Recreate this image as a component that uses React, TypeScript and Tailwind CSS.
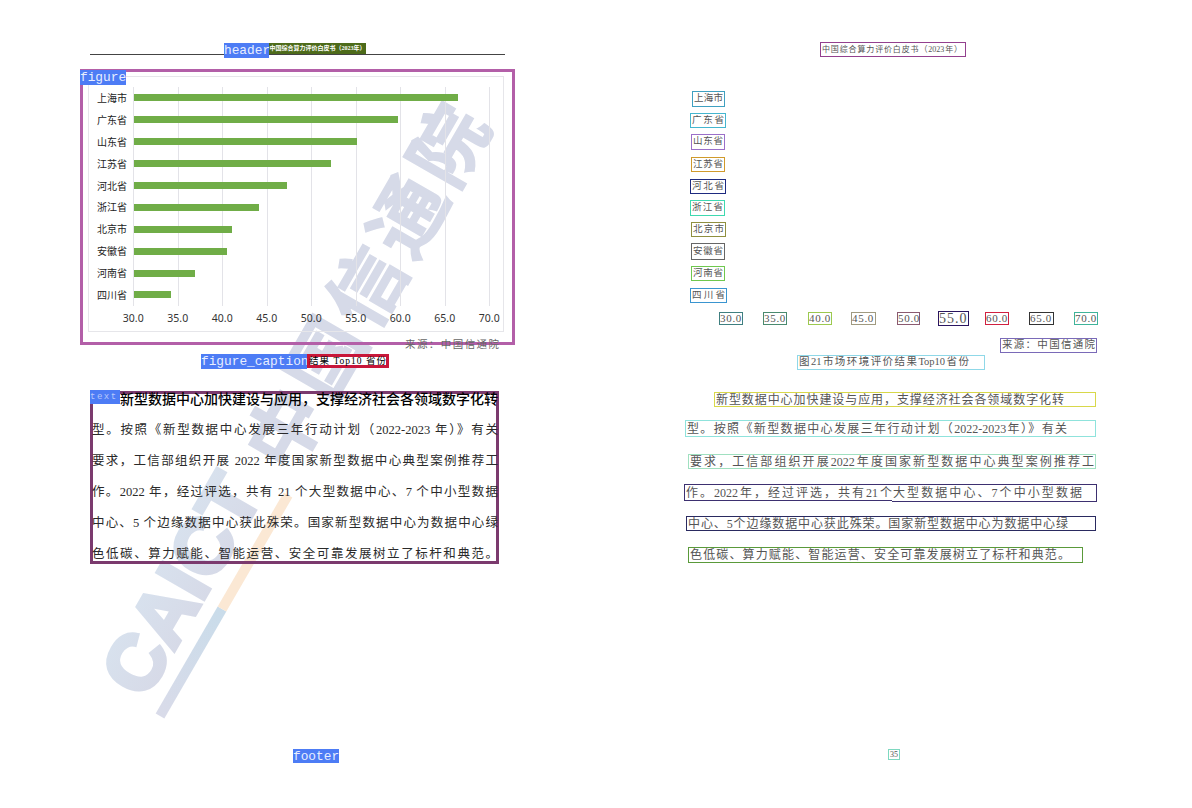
import React from 'react';

const provinces = [
  { name: '上海市', value: 66.5 },
  { name: '广东省', value: 59.7 },
  { name: '山东省', value: 55.15 },
  { name: '江苏省', value: 52.15 },
  { name: '河北省', value: 47.3 },
  { name: '浙江省', value: 44.1 },
  { name: '北京市', value: 41.05 },
  { name: '安徽省', value: 40.5 },
  { name: '河南省', value: 36.95 },
  { name: '四川省', value: 34.25 },
];

const ticks = ['30.0', '35.0', '40.0', '45.0', '50.0', '55.0', '60.0', '65.0', '70.0'];

const leftLines = [
  { text: '新型数据中心加快建设与应用，支撑经济社会各领域数字化转', cls: 'pl-[28px] text-[14px] font-medium text-black' },
  { text: '型。按照《新型数据中心发展三年行动计划（2022-2023 年）》有关', cls: 'text-[12.5px]' },
  { text: '要求，工信部组织开展 2022 年度国家新型数据中心典型案例推荐工', cls: 'text-[12.5px]' },
  { text: '作。2022 年，经过评选，共有 21 个大型数据中心、7 个中小型数据', cls: 'text-[12.5px]' },
  { text: '中心、5 个边缘数据中心获此殊荣。国家新型数据中心为数据中心绿', cls: 'text-[12.5px]' },
  { text: '色低碳、算力赋能、智能运营、安全可靠发展树立了标杆和典范。', cls: 'text-[12.5px]' },
];

// detected text boxes of the right page, coordinates are relative to the page
const boxes = [
  { text: '中国综合算力评价白皮书（2023年）', cls: 'left-[224px] top-[42px] w-[146px] h-[15px] border-[#93408e] text-[8px] px-[1px] pr-[3px]' },
  { text: '上海市', cls: 'left-[96px] top-[91px] w-[33px] h-[16px] border-[#3fa0c0] text-[9.5px] px-[1px]' },
  { text: '广东省', cls: 'left-[94px] top-[113px] w-[36px] h-[15px] border-[#45b6cf] text-[9.5px] px-[1px]' },
  { text: '山东省', cls: 'left-[95px] top-[134px] w-[34px] h-[16px] border-[#9b6fc9] text-[9.5px] px-[1px]' },
  { text: '江苏省', cls: 'left-[95px] top-[157px] w-[34px] h-[15px] border-[#d09a2c] text-[9.5px] px-[1px]' },
  { text: '河北省', cls: 'left-[94px] top-[179px] w-[36px] h-[15px] border-[#1e2a80] text-[9.5px] px-[1px]' },
  { text: '浙江省', cls: 'left-[94px] top-[200px] w-[35px] h-[16px] border-[#3fd9b0] text-[9.5px] px-[1px]' },
  { text: '北京市', cls: 'left-[95px] top-[222px] w-[35px] h-[15px] border-[#8f8f3f] text-[9.5px] px-[1px]' },
  { text: '安徽省', cls: 'left-[95px] top-[243px] w-[34px] h-[17px] border-[#666666] text-[9.5px] px-[1px]' },
  { text: '河南省', cls: 'left-[95px] top-[266px] w-[34px] h-[15px] border-[#6fc84f] text-[9.5px] px-[1px]' },
  { text: '四川省', cls: 'left-[94px] top-[288px] w-[37px] h-[15px] border-[#3a95d0] text-[9.5px] px-[1px]' },
  { text: '30.0', cls: 'left-[123px] top-[312px] w-[24px] h-[13px] border-[#3f7f80] text-[11px] tracking-[0.7px]' },
  { text: '35.0', cls: 'left-[167px] top-[312px] w-[24px] h-[13px] border-[#4a8a6f] text-[11px] tracking-[0.7px]' },
  { text: '40.0', cls: 'left-[212px] top-[312px] w-[24px] h-[13px] border-[#9cc94f] text-[11px] tracking-[0.7px]' },
  { text: '45.0', cls: 'left-[255px] top-[312px] w-[25px] h-[13px] border-[#a09a80] text-[11px] tracking-[0.7px]' },
  { text: '50.0', cls: 'left-[301px] top-[312px] w-[23px] h-[13px] border-[#8a5a70] text-[11px] tracking-[0.7px]' },
  { text: '55.0', cls: 'left-[342px] top-[311px] w-[31px] h-[15px] border-[#2a1560] text-[14px] tracking-[1px]' },
  { text: '60.0', cls: 'left-[389px] top-[312px] w-[24px] h-[13px] border-[#d02040] text-[11px] tracking-[0.7px]' },
  { text: '65.0', cls: 'left-[433px] top-[312px] w-[25px] h-[13px] border-[#333333] text-[11px] tracking-[0.7px]' },
  { text: '70.0', cls: 'left-[478px] top-[312px] w-[24px] h-[13px] border-[#3fb39a] text-[11px] tracking-[0.7px]' },
  { text: '来源：中国信通院', cls: 'left-[404px] top-[338px] w-[97px] h-[15px] border-[#7a6ab8] text-[10.5px] px-[1px]' },
  { text: '图21市场环境评价结果Top10省份', cls: 'left-[201px] top-[355px] w-[188px] h-[15px] border-[#8fd8e8] text-[10.5px] pl-[1px] pr-[15px]' },
  { text: '新型数据中心加快建设与应用，支撑经济社会各领域数字化转', cls: 'left-[118px] top-[392px] w-[382px] h-[15px] border-[#d8d84a] text-[12px] pl-[1px] pr-[31px]' },
  { text: '型。按照《新型数据中心发展三年行动计划（2022-2023年）》有关', cls: 'left-[89px] top-[420px] w-[411px] h-[17px] border-[#8fe3dc] text-[12px] pl-[1px] pr-[28px]' },
  { text: '要求，工信部组织开展2022年度国家新型数据中心典型案例推荐工', cls: 'left-[92px] top-[454px] w-[408px] h-[15px] border-[#a0e0c0] text-[12px] px-[1px]' },
  { text: '作。2022年，经过评选，共有21个', cls: 'left-[88px] top-[484px] w-[208px] h-[17px] border-[#3d3070] border-r-0 text-[12px] pl-[1px]' },
  { text: '大型数据中心、7个中小型数据', cls: 'left-[296px] top-[484px] w-[205px] h-[18px] border-[#3d3070] border-l-0 text-[12px] pl-[1px] pr-[14px]' },
  { text: '中心、5个边缘数据中心获此殊荣。国家新型数据中心为数据中心绿', cls: 'left-[90px] top-[516px] w-[410px] h-[15px] border-[#2a2a60] text-[12px] pl-[1px] pr-[27px]' },
  { text: '色低碳、算力赋能、智能运营、安全可靠发展树立了标杆和典范。', cls: 'left-[92px] top-[547px] w-[395px] h-[16px] border-[#5a9a3a] text-[12px] pl-[1px] pr-[12px]' },
  { text: '35', cls: 'left-[292px] top-[749px] w-[12px] h-[11px] border-[#7ed8c0] text-[8px] px-[1px]' },
];

const Label = ({ text, cls }: { text: string; cls: string }) => (
  <div className={`bg-[#4d7cf5] font-['Liberation_Mono',monospace] whitespace-nowrap ${cls}`}>
    {text}
  </div>
);

const Watermark = () => (
  <svg className="absolute left-0 top-0 w-[596px] h-[808px]" viewBox="0 0 596 808" fill="none" aria-hidden="true">
    <defs>
      <linearGradient id="wmLetters" x1="0" y1="0" x2="0" y2="1">
        <stop offset="0" stopColor="#d8e3ef" />
        <stop offset="1" stopColor="#d6d8e6" />
      </linearGradient>
      <linearGradient id="wmLine" gradientUnits="userSpaceOnUse" x1="222" y1="609" x2="160" y2="716">
        <stop offset="0" stopColor="#c9dcea" />
        <stop offset="1" stopColor="#d9dbe9" />
      </linearGradient>
    </defs>
    <text
      transform="translate(145 701) rotate(-60)"
      fill="url(#wmLetters)"
      stroke="url(#wmLetters)"
      strokeWidth="4"
      fontSize="78"
      fontWeight="700"
      fontFamily="'Liberation Sans', sans-serif"
    >
      CAICT
    </text>
    <text
      transform="translate(290 476) rotate(-60)"
      fill="#d6dae8"
      stroke="#d6dae8"
      strokeWidth="1.5"
      fontSize="76"
      fontWeight="700"
      letterSpacing="6"
      fontFamily="'Noto Sans CJK SC', sans-serif"
    >
      中国信通院
    </text>
    <path d="M160 716 L222 609" stroke="url(#wmLine)" strokeWidth="10" />
    <path d="M222 609 L288 495" stroke="#fbe8d4" strokeWidth="10" />
  </svg>
);

const Chart = () => (
  <div className="relative w-[416px] h-[256px] border border-[#e6e6ea] font-['Noto_Sans_CJK_SC',sans-serif]">
    <div className="absolute left-[44px] top-[10px] w-[357px] h-[219px] flex justify-between">
      {ticks.map((t) => (
        <div key={t} className="w-px h-full bg-[#e3e3e8]" />
      ))}
    </div>
    <div className="relative pt-[10px]">
      {provinces.map((p) => (
        <div key={p.name} className="flex items-center h-[21.9px]">
          <div className="w-[38px] text-right text-[10px] leading-none text-[#222222]">{p.name}</div>
          <div
            className="ml-[6.5px] h-[7px] bg-[#70ad47]"
            style={{ width: ((p.value - 30) / 40) * 356 }}
          />
        </div>
      ))}
      <div className="flex ml-[22px] mt-[2px]">
        {ticks.map((t) => (
          <div key={t} className="w-[44.5px] shrink-0 text-center text-[10.5px] leading-[20px] text-[#333333] font-['Noto_Sans',sans-serif]">
            {t}
          </div>
        ))}
      </div>
    </div>
  </div>
);

const LeftPage = () => (
  <div className="relative w-[596px] h-[808px] flex flex-col pt-[43px]">
    <Watermark />

    <div className="relative z-10 ml-[90px] w-[415px] h-[12px] border-b border-[#444444] flex pl-[134px]">
      <Label text="header" cls="w-[45px] h-[15px] text-[12.8px] leading-[15px] text-[#e8eeff]" />
      <div className="w-[97px] h-[11px] bg-[#4d6b1a] text-white font-bold text-[6px] leading-[11px] text-center whitespace-nowrap font-['Liberation_Serif','Noto_Sans_CJK_SC',serif]">
        中国综合算力评价白皮书（2023年）
      </div>
    </div>

    <div className="relative z-10 mt-[14px] ml-[80px] w-[435px] h-[276px] border-[3px] border-[#b35fa8] pl-[5px] pt-[4px]">
      <Chart />
      <Label text="figure" cls="absolute -left-[3px] -top-[2px] w-[46px] h-[15px] text-[12.8px] leading-[15px] text-[#e8eeff]" />
      <div className="absolute left-[322px] top-[265px] w-[94px] text-[10.5px] leading-[15px] text-[#666666] [text-align-last:justify] font-['Liberation_Serif','Noto_Sans_CJK_SC',serif]">
        来源：中国信通院
      </div>
    </div>

    <div className="relative z-10 mt-[9px] ml-[201px] flex">
      <Label text="figure_caption" cls="w-[106px] h-[15px] text-[12.8px] leading-[15px] text-[#e8eeff]" />
      <div className="w-[82px] h-[14px] border-[3px] border-[#c8173a] bg-white flex items-center justify-center text-[9.5px] tracking-[1px] text-black whitespace-nowrap font-['Liberation_Serif','Noto_Sans_CJK_SC',serif]">
        结果 Top10 省份
      </div>
    </div>

    <div className="relative z-10 mt-[22px] ml-[90px] w-[409px] h-[173px] border-[3px] border-[#7b3a6e]">
      <Label text="text" cls="absolute -left-[3px] -top-[4px] w-[30px] h-[14px] text-[9px] leading-[14px] tracking-[1.5px] text-[#b9c9fb]" />
      <div className="-ml-[1px] -mt-[10px] w-[406px] leading-[31px] text-[#2a2a2a] font-['Liberation_Serif','Noto_Sans_CJK_SC',serif]">
        {leftLines.map((l) => (
          <div key={l.text} className={`whitespace-nowrap [text-align-last:justify] ${l.cls}`}>
            {l.text}
          </div>
        ))}
      </div>
    </div>

    <div className="relative z-10 mt-auto mb-[45px] ml-[293px]">
      <Label text="footer" cls="w-[46px] h-[14px] text-[12.8px] leading-[15px] text-[#e8eeff]" />
    </div>
  </div>
);

const RightPage = () => (
  <div className="relative w-[596px] h-[808px] font-['Liberation_Serif','Noto_Sans_CJK_SC',serif] text-[#555555]">
    {boxes.map((b) => (
      <div key={b.text} className={`absolute border flex items-center ${b.cls}`}>
        <div className="w-full whitespace-nowrap leading-none [text-align-last:justify]">{b.text}</div>
      </div>
    ))}
  </div>
);

export default function App() {
  return (
    <div className="flex w-[1192px] h-[808px] bg-white overflow-hidden">
      <LeftPage />
      <RightPage />
    </div>
  );
}
